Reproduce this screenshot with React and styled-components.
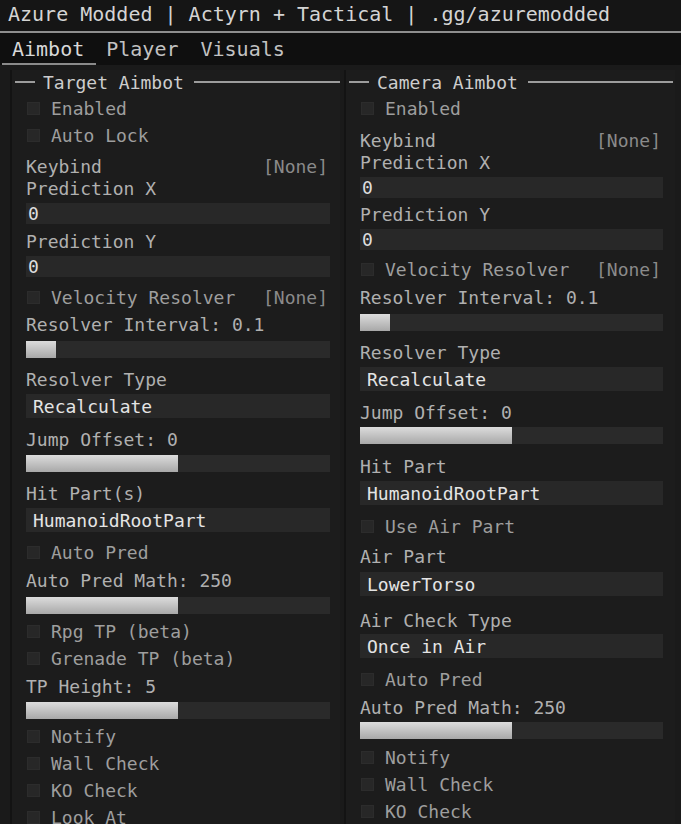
import React from 'react'
import { styled, createGlobalStyle } from 'styled-components'

const GlobalStyle = createGlobalStyle`
    body {
        margin: 0;
        background: #181818;
    }
    #root {
        height: 824px;
        overflow: hidden;
    }
`

const Window = styled.div`
    display: flex;
    flex-direction: column;
    height: 824px;
    overflow: hidden;
    background: #181818;
    font-family: "DejaVu Sans Mono", "Liberation Mono", monospace;
    color: #b4b4b4;
`

const TitleBar = styled.div`
    flex-shrink: 0;
    height: 33px;
    box-sizing: border-box;
    padding: 0 0 3px 8px;
    display: flex;
    align-items: center;
    background: #151515;
    border-bottom: 2px solid #8e8e8e;
    font-size: 20px;
    color: #d4d4d4;
    white-space: nowrap;
`

const TabBar = styled.div`
    flex-shrink: 0;
    height: 32px;
    display: flex;
    align-items: stretch;
    padding-left: 2px;
    background: #0f0f0f;
`

const Tab = styled.div`
    display: flex;
    align-items: center;
    padding: 2px 12px 0 10px;
    font-size: 20px;
    color: ${p => (p.$active ? '#d8d8d8' : '#c2c2c2')};
    border-bottom: 2px solid ${p => (p.$active ? '#8a8a8a' : 'transparent')};
`

const Columns = styled.div`
    display: grid;
    grid-template-columns: 330px 331px;
    align-items: start;
    gap: 4px;
    padding: 5px 6px 0 10px;
    flex: 1 0 auto;
    background: #1a1a1a;
`

const Group = styled.div`
    display: flex;
    flex-direction: column;
    min-height: 780px;
    background: #1c1c1c;
    border-left: 2px solid #131313;
    padding: 0 ${p => p.$padRight}px 0 14px;
`

const Legend = styled.div`
    height: 24px;
    display: flex;
    align-items: center;
    margin-left: -11px;
    margin-right: ${p => p.$lineEnd}px;
    font-size: 18px;
    color: #cdcdcd;
`

const LegendLine = styled.div`
    height: 2px;
    background: #9c9c9c;
    width: ${p => (p.$grow ? 'auto' : '20px')};
    flex: ${p => (p.$grow ? 1 : 'none')};
`

const LegendText = styled.span`
    margin: 0 10px 0 8px;
    white-space: nowrap;
`

const Items = styled.div`
    display: flex;
    flex-direction: column;
    padding-top: 1px;
`

const CheckRow = styled.div`
    height: 27px;
    margin-top: ${p => p.$mt || 0}px;
    display: flex;
    align-items: center;
    font-size: 18px;
    color: #9e9e9e;
    white-space: nowrap;
`

const Box = styled.div`
    width: 13px;
    height: 13px;
    margin: 0 11px 0 1px;
    background: #272727;
    box-shadow: inset 0 0 0 1px #2c2c2c;
`

const BindText = styled.span`
    margin-left: auto;
    margin-right: 2px;
    color: #8a8a8a;
`

const Label = styled.div`
    height: 22px;
    margin-top: ${p => p.$mt || 0}px;
    display: flex;
    align-items: center;
    justify-content: space-between;
    font-size: 18px;
    color: #b0b0b0;
    white-space: nowrap;
`

const TextBox = styled.div`
    height: 21px;
    margin-top: ${p => p.$mt || 0}px;
    display: flex;
    align-items: center;
    padding-left: 2px;
    background: #282828;
    font-size: 18px;
    color: #dedede;
`

const Dropdown = styled.div`
    height: 24px;
    margin-top: ${p => p.$mt || 0}px;
    display: flex;
    align-items: center;
    padding-left: 7px;
    background: #282828;
    font-size: 18px;
    color: #e4e4e4;
    white-space: nowrap;
`

const Track = styled.div`
    height: 17px;
    margin-top: ${p => p.$mt || 0}px;
    background: #2a2a2a;
    display: flex;
`

const Fill = styled.div`
    height: 100%;
    background: linear-gradient(#dcdcdc, #a8a8a8);
`

const leftItems = [
    { type: 'check', text: 'Enabled' },
    { type: 'check', text: 'Auto Lock' },
    { type: 'label', text: 'Keybind', bind: '[None]', mt: 6 },
    { type: 'label', text: 'Prediction X' },
    { type: 'input', text: '0', mt: 4 },
    { type: 'label', text: 'Prediction Y', mt: 6 },
    { type: 'input', text: '0', mt: 4 },
    { type: 'check', text: 'Velocity Resolver', bind: '[None]', mt: 7 },
    { type: 'label', text: 'Resolver Interval: 0.1', mt: 2 },
    { type: 'slider', value: 10, mt: 6 },
    { type: 'label', text: 'Resolver Type', mt: 10 },
    { type: 'dropdown', text: 'Recalculate', mt: 4 },
    { type: 'label', text: 'Jump Offset: 0', mt: 10 },
    { type: 'slider', value: 50, mt: 5 },
    { type: 'label', text: 'Hit Part(s)', mt: 10 },
    { type: 'dropdown', text: 'HumanoidRootPart', mt: 4 },
    { type: 'check', text: 'Auto Pred', mt: 7 },
    { type: 'label', text: 'Auto Pred Math: 250', mt: 3 },
    { type: 'slider', value: 50, mt: 6 },
    { type: 'check', text: 'Rpg TP (beta)', mt: 4 },
    { type: 'check', text: 'Grenade TP (beta)' },
    { type: 'label', text: 'TP Height: 5', mt: 3 },
    { type: 'slider', value: 50, mt: 5 },
    { type: 'check', text: 'Notify', mt: 4 },
    { type: 'check', text: 'Wall Check' },
    { type: 'check', text: 'KO Check' },
    { type: 'check', text: 'Look At' },
]

const rightItems = [
    { type: 'check', text: 'Enabled' },
    { type: 'label', text: 'Keybind', bind: '[None]', mt: 7 },
    { type: 'label', text: 'Prediction X' },
    { type: 'input', text: '0', mt: 4 },
    { type: 'label', text: 'Prediction Y', mt: 5 },
    { type: 'input', text: '0', mt: 4 },
    { type: 'check', text: 'Velocity Resolver', bind: '[None]', mt: 6 },
    { type: 'label', text: 'Resolver Interval: 0.1', mt: 3 },
    { type: 'slider', value: 10, mt: 6 },
    { type: 'label', text: 'Resolver Type', mt: 10 },
    { type: 'dropdown', text: 'Recalculate', mt: 4 },
    { type: 'label', text: 'Jump Offset: 0', mt: 10 },
    { type: 'slider', value: 50, mt: 4 },
    { type: 'label', text: 'Hit Part', mt: 11 },
    { type: 'dropdown', text: 'HumanoidRootPart', mt: 4 },
    { type: 'check', text: 'Use Air Part', mt: 8 },
    { type: 'label', text: 'Air Part', mt: 5 },
    { type: 'dropdown', text: 'LowerTorso', mt: 5 },
    { type: 'label', text: 'Air Check Type', mt: 13 },
    { type: 'dropdown', text: 'Once in Air', mt: 3 },
    { type: 'check', text: 'Auto Pred', mt: 8 },
    { type: 'label', text: 'Auto Pred Math: 250', mt: 3 },
    { type: 'slider', value: 50, mt: 4 },
    { type: 'check', text: 'Notify', mt: 5 },
    { type: 'check', text: 'Wall Check' },
    { type: 'check', text: 'KO Check' },
]

const Item = ({ item }) => {
    switch (item.type) {
        case 'check':
            return (
                <CheckRow $mt={item.mt}>
                    <Box />
                    {item.text}
                    {item.bind && <BindText>{item.bind}</BindText>}
                </CheckRow>
            )
        case 'label':
            return (
                <Label $mt={item.mt}>
                    <span>{item.text}</span>
                    {item.bind && <BindText>{item.bind}</BindText>}
                </Label>
            )
        case 'input':
            return <TextBox $mt={item.mt}>{item.text}</TextBox>
        case 'dropdown':
            return <Dropdown $mt={item.mt}>{item.text}</Dropdown>
        case 'slider':
            return (
                <Track $mt={item.mt}>
                    <Fill style={{ width: item.value + '%' }} />
                </Track>
            )
        default:
            return null
    }
}

const GroupBox = ({ title, items, padRight, lineEnd }) => (
    <Group $padRight={padRight}>
        <Legend $lineEnd={lineEnd}>
            <LegendLine />
            <LegendText>{title}</LegendText>
            <LegendLine $grow />
        </Legend>
        <Items>
            {items.map((item, i) => <Item key={i} item={item} />)}
        </Items>
    </Group>
)

const App = () => (
    <>
        <GlobalStyle />
        <Window>
            <TitleBar>Azure Modded | Actyrn + Tactical | .gg/azuremodded</TitleBar>
            <TabBar>
                <Tab $active>Aimbot</Tab>
                <Tab>Player</Tab>
                <Tab>Visuals</Tab>
            </TabBar>
            <Columns>
                <GroupBox title="Target Aimbot" items={leftItems} padRight={10} lineEnd={-10} />
                <GroupBox title="Camera Aimbot" items={rightItems} padRight={12} lineEnd={-10} />
            </Columns>
        </Window>
    </>
)

export default App
